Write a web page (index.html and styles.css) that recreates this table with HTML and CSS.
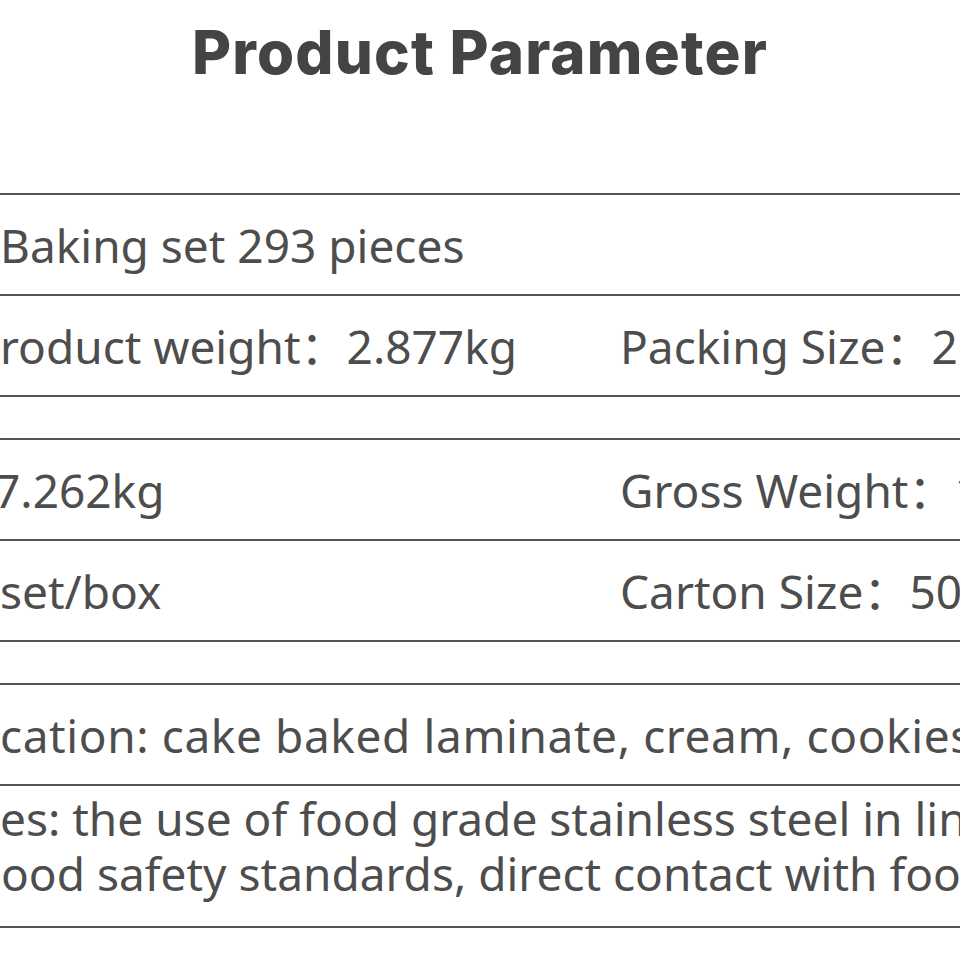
FILE: index.html
```html
<!DOCTYPE html>
<html lang="en">
<head>
<meta charset="utf-8">
<title>Product Parameter</title>
<link rel="stylesheet" href="styles.css">
</head>
<body>
<main class="sheet">
  <h1 class="title">Product Parameter</h1>

  <section class="group">
    <div class="row">
      <div class="cell">Baking set 293 pieces</div>
    </div>
    <div class="row split">
      <div class="cell"><span class="pre"><span>P</span></span>roduct weight：2.877kg</div>
      <div class="cell">Packing Size：26*20*12cm</div>
    </div>
  </section>

  <section class="group">
    <div class="row split">
      <div class="cell"><span class="pre"><span>Net Weight：</span></span><span class="nudge">7.262kg</span></div>
      <div class="cell">Gross Weight：15.5kg</div>
    </div>
    <div class="row split">
      <div class="cell"><span class="pre"><span>Packing：4 </span></span>set/box</div>
      <div class="cell">Carton Size：50*42*38cm</div>
    </div>
  </section>

  <section class="group">
    <div class="row">
      <div class="cell wide"><span class="pre"><span>Appli</span></span>cation: cake baked laminate, cream, cookies, etc.</div>
    </div>
    <div class="row tall">
      <div class="cell lines">
        <div class="line"><span class="pre"><span>Featur</span></span>es: the use of food grade stainless steel in line with</div>
        <div class="line"><span class="pre gap"><span>f</span></span><span class="push">ood safety standards, direct contact with food</span></div>
      </div>
    </div>
  </section>
</main>
</body>
</html>
```

FILE: styles.css
```css
html, body {
  margin: 0;
  padding: 0;
  background: #ffffff;
}

body {
  width: 960px;
  height: 960px;
  overflow: hidden;
  font-family: "Noto Sans", "Noto Sans CJK SC", sans-serif;
  color: #4d4d4d;
}

.sheet {
  display: flex;
  flex-direction: column;
}

.title {
  margin: 0 0 89px;
  font-family: "Inter", "Noto Sans", sans-serif;
  font-weight: 800;
  font-size: 60px;
  line-height: 104px;
  letter-spacing: 1.2px;
  text-align: center;
  color: #444444;
}

.group {
  border-top: 2px solid #545454;
  margin-bottom: 41px;
}

.row {
  height: 99px;
  border-bottom: 2px solid #545454;
  display: flex;
  align-items: center;
  font-size: 46px;
  white-space: nowrap;
}

.row.tall {
  height: 140px;
}

.row.split {
  display: grid;
  grid-template-columns: 620px 1fr;
  align-items: center;
}

.cell {
  white-space: nowrap;
  line-height: 60px;
}

.cell.wide {
  letter-spacing: 0.6px;
}

.pre {
  display: inline-flex;
  width: 0;
  justify-content: flex-end;
  white-space: nowrap;
}

.pre.gap > span {
  padding-right: 10px;
}

.nudge {
  margin-left: -6px;
}

.push {
  margin-left: 1px;
}

.lines {
  display: flex;
  flex-direction: column;
  padding-bottom: 20px;
}

.line {
  line-height: 55px;
}
```
